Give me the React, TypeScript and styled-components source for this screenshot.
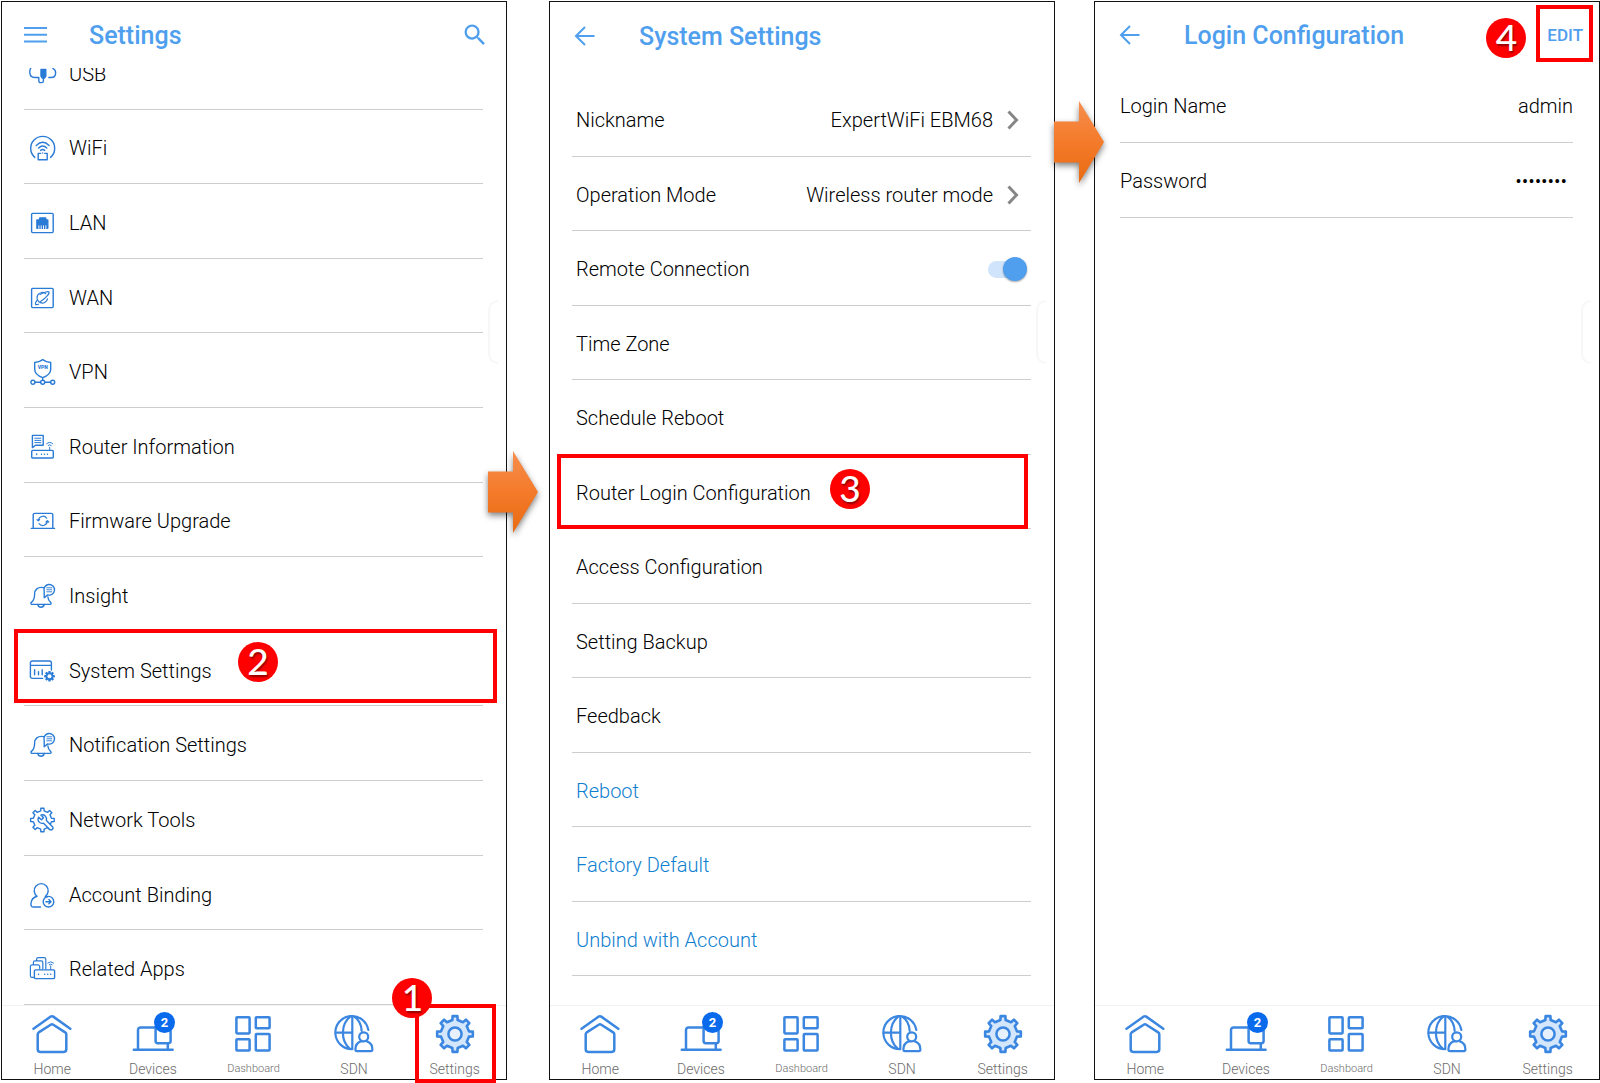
import React from "react";
import styled, { createGlobalStyle, css } from "styled-components";
import { MdSearch } from "react-icons/md";

const color = {
  accent: "#4f9fee",
  icon: "#2a7bd6",
  nav: "#3a86e0",
  link: "#0f80d0",
  line: "#cdcdcd",
  callout: "#ff0000",
};

const GlobalStyle = createGlobalStyle`
  *, *::before, *::after { box-sizing: border-box; }
  body { margin: 0; background: #fff; color: #000; font-family: Roboto, "Liberation Sans", sans-serif; }
  button { font: inherit; color: inherit; background: none; border: 0; padding: 0; text-align: left; cursor: pointer; }
  svg { display: block; flex: none; overflow: visible; }
`;

/* ---------- layout ---------- */

const Page = styled.main`
  display: grid;
  grid-template-columns: 1fr 42px 1fr 39px 1fr;
  min-height: 100vh;
  padding: 1px 0 3px 1px;
`;

const Gap = styled.div`
  position: relative;
  z-index: 3;
`;

const FlowArrow = styled.svg<{ $left: number; $top: number }>`
  position: absolute;
  left: ${(p) => p.$left}px;
  top: ${(p) => p.$top}px;
  filter: drop-shadow(0 3px 3px rgba(0, 0, 0, 0.5));
`;

const Panel = styled.section`
  position: relative;
  display: flex;
  flex-direction: column;
  min-width: 0;
  border: 1px solid #111;
`;

const Header = styled.header<{ $height?: number; $inset?: number }>`
  position: relative;
  z-index: 1;
  flex: none;
  display: flex;
  align-items: center;
  height: ${(p) => p.$height ?? 66}px;
  padding: 0 16px 0 ${(p) => p.$inset ?? 24}px;
`;

const HeaderButton = styled.button`
  width: 65px;
  color: ${color.accent};
`;

const Title = styled.h1`
  flex: 1;
  margin: 0;
  padding-top: 2px;
  color: ${color.accent};
  font-size: 25px;
  font-weight: 500;
  line-height: 32px;
`;

const SearchButton = styled.button`
  color: ${color.accent};
  margin-right: 1px;
`;

const EditButton = styled.button`
  position: relative;
  color: ${color.accent};
  font-size: 17px;
  font-weight: 500;
  line-height: 24px;
`;

const EdgeHandle = styled.div`
  position: absolute;
  right: 8px;
  top: 298px;
  width: 10px;
  height: 64px;
  border: 2px solid #f7f7f7;
  border-right: 0;
  border-radius: 10px 0 0 10px;
`;

const Viewport = styled.div`
  flex: 1;
  display: flex;
  flex-direction: column;
  overflow: hidden;
  padding: 0 23px 0 22px;
`;

const ScrolledList = styled.ul`
  flex: 1;
  display: flex;
  flex-direction: column;
  margin: -33px 0 0;
  padding: 0;
  list-style: none;
`;

const OptionList = styled.ul`
  flex: 1;
  display: flex;
  flex-direction: column;
  margin: 12px 23px 29px 22px;
  padding: 0;
  list-style: none;
`;

const Row = styled.li`
  position: relative;
  flex: 1;
  display: flex;
  min-height: 48px;
  border-bottom: 1px solid ${color.line};
`;

const rowText = css`
  font-size: 20px;
  font-weight: 350;
  line-height: 24px;
`;

const rowContent = css`
  ${rowText}
  flex: 1;
  display: flex;
  align-items: center;
`;

const MenuButton = styled.button`
  ${rowContent}
  gap: 13px;
  padding: 4px 6px 0;
`;

const OptionButton = styled.button<{ $link?: boolean }>`
  ${rowContent}
  padding: 3px 12px 0 4px;
  color: ${(p) => (p.$link ? color.link : "inherit")};
`;

const OptionLabel = styled.label`
  ${rowContent}
  justify-content: space-between;
  padding: 3px 4px 0;
`;

const Value = styled.span`
  margin-left: auto;
  margin-right: 14px;
`;

const Switch = styled.input`
  appearance: none;
  position: relative;
  width: 39px;
  height: 17px;
  margin: 0;
  border-radius: 9px;
  background: #d0e4fb;
  cursor: pointer;

  &::before {
    content: "";
    position: absolute;
    right: 0;
    top: -4px;
    width: 24px;
    height: 24px;
    border-radius: 50%;
    background: ${color.accent};
    box-shadow: 0 1px 2px rgba(0, 0, 0, 0.35);
  }
`;

const Details = styled.dl`
  flex: 1;
  margin: 0 26px 0 25px;
`;

const DetailRow = styled.div`
  ${rowText}
  display: flex;
  justify-content: space-between;
  align-items: center;
  height: 75px;
  padding-top: 2px;
  border-bottom: 1px solid ${color.line};

  dd {
    margin: 0;
  }
`;

const Secret = styled.dd`
  padding-right: 6px;
`;

/* ---------- bottom navigation ---------- */

const Nav = styled.nav`
  position: relative;
  z-index: 2;
  flex: none;
  display: flex;
  padding-right: 1px;
  border-top: 1px solid #f2f2f2;
`;

const NavItem = styled.button`
  position: relative;
  flex: 1 1 0;
  display: flex;
  flex-direction: column;
  align-items: center;
  gap: 7px;
  padding: 8px 0 2px;
`;

const NavLabel = styled.span<{ $small?: boolean }>`
  color: #6c6c6c;
  font-size: ${(p) => (p.$small ? 11 : 14)}px;
  font-weight: 350;
  line-height: 16px;
`;

const NavIcon = styled.span`
  position: relative;
  color: ${color.nav};
`;

const Count = styled.span`
  position: absolute;
  left: 21px;
  top: -2px;
  width: 21px;
  height: 21px;
  border-radius: 50%;
  background: #0a6aec;
  color: #fff;
  font-size: 13px;
  font-weight: 700;
  line-height: 22px;
  text-align: center;
`;

/* ---------- tutorial call-outs ---------- */

const Highlight = styled.span<{ $inset: string }>`
  position: absolute;
  inset: ${(p) => p.$inset};
  border: 4px solid ${color.callout};
  pointer-events: none;
`;

const Step = styled.span<{ $left: number; $top: number }>`
  position: absolute;
  left: ${(p) => p.$left}px;
  top: ${(p) => p.$top}px;
  width: 40px;
  height: 40px;
  border-radius: 50%;
  background: ${color.callout};
  color: #fff;
  font-family: Lato, "Open Sans", sans-serif;
  font-size: 37px;
  font-weight: 500;
  line-height: 38px;
  text-align: center;
  text-shadow: 1px 2px 2px rgba(70, 0, 0, 0.6);
  pointer-events: none;
`;

/* ---------- drawings ---------- */

function gear(cx: number, cy: number, outer: number, inner: number, teeth = 8) {
  const step = (Math.PI * 2) / teeth;
  const pts: string[] = [];
  const at = (r: number, a: number) =>
    `${(cx + r * Math.sin(a)).toFixed(2)} ${(cy - r * Math.cos(a)).toFixed(2)}`;
  for (let i = 0; i < teeth; i++) {
    const a = i * step;
    pts.push(at(inner, a - step * 0.24), at(outer, a - step * 0.17));
    pts.push(at(outer, a + step * 0.17), at(inner, a + step * 0.24));
  }
  return `M${pts.join("L")}Z`;
}

const Glyph = ({ children }: { children: React.ReactNode }) => (
  <svg width="26" height="26" viewBox="0 0 26 26" fill="none" stroke={color.icon} strokeWidth="1.4" strokeLinecap="round" strokeLinejoin="round" aria-hidden="true">
    {children}
  </svg>
);

const Frame = () => <rect x="1.6" y="3.4" width="21.6" height="19.2" rx="1" />;

const Bell = () => (
  <Glyph>
    <path d="M13.6 4.6C7.5 3.6 4.6 6.8 4.6 11.2c0 5-1.2 6.6-3.2 8.2-1.2 1 .0 2 .8 2H20c1 0 1.7-1 .6-2-1.900-1.600-2.500-3-2.700-5.400" />
    <path d="M7.800 21.500c.9 3.600 5.600 3.600 6.400 0M14.200 8.500v6.300l3.500-2.900a5.300 5.300 0 1 0-3.500-3.400Z" />
    <path d="M16.800 4.800h5M16.800 6.800h5M16.800 8.800h5" strokeWidth="0.9" />
  </Glyph>
);

const glyphs: Record<string, React.ReactNode> = {
  usb: (
    <Glyph>
      <path d="M2 5C-1.500 9.500-1 16.500 4.500 16.500H8.800V20a1.600 1.600 0 0 0 1.600 1.600h1.400a1.600 1.600 0 0 0 1.600-1.600v-3" />
      <path d="M18.800 16.500H21c6 0 5.500-7.500 2-8.800C22 3.500 18 2 14.500 4" />
      <path d="M11 8.500h4.800V15l-1.300 2h-2.200L11 15Z" fill={color.icon} />
    </Glyph>
  ),
  wifi: (
    <Glyph>
      <path d="M4.800 22.400a12 12 0 1 1 15.800 0" />
      <path d="M6.300 10.400q6.400-6.200 12.800 0M8.600 13q4.100-3.900 8.200 0M10.700 15.400q2-1.700 4 0" />
      <path d="M10.600 18.400H8.200v6.400h9v-6.400h-2.400M12.700 17.900v.1" />
    </Glyph>
  ),
  lan: (
    <Glyph>
      <Frame />
      <path d="M9.700 8h6v1.900h2.100V18.200H6.900V9.900h2.800Z" fill={color.icon} />
      <path d="M8.900 15.400v4M11.200 15.400v4M13.500 15.400v4M15.800 15.400v4" stroke="#fff" strokeWidth="0.900" strokeLinecap="butt" />
    </Glyph>
  ),
  wan: (
    <Glyph>
      <Frame />
      <path d="M15.800 8.700a5.300 5.300 0 1 0 1.700 5.200" strokeWidth="1.200" />
      <path d="M7.200 15.200c-3 4-1.900 5.200 1.400 4M10 9.400c4-2.300 8.600-3.300 9-2.300.6 1.600-3.200 6-8.400 9.400" strokeWidth="1.200" />
    </Glyph>
  ),
  vpn: (
    <Glyph>
      <path d="M12.700.6c2.600 2 5 2.700 8 2.900v6.700c0 4-3.200 6.600-8 8.400-4.800-1.800-8-4.400-8-8.400V3.500c3-.2 5.400-.9 8-2.900ZM12.700 18.600v2.600" />
      <circle cx="2.900" cy="23.300" r="2" />
      <circle cx="12.700" cy="23.300" r="2" />
      <circle cx="22.700" cy="23.300" r="2" />
      <path d="M4.900 23.300h5.800M14.700 23.300h6" />
      <text x="12.700" y="10.300" fontFamily="Roboto, sans-serif" fontSize="5" fontWeight="900" textAnchor="middle" fill={color.icon} stroke="none">VPN</text>
    </Glyph>
  ),
  router: (
    <Glyph>
      <path d="M2.400 1.400h10.800v9.800H5.600l-3.200 2.400Z" />
      <path d="M4.800 4.200h6M4.800 6.400h6M4.800 8.600h6" strokeWidth="1" />
      <rect x="1.700" y="16.400" width="21.600" height="7.600" rx="1" />
      <path d="M6.600 19.900v.6M11.400 20.200h.1M14.400 20.200h.1M17.400 20.200h.1" />
      <path d="M19.700 16.200v-3M16.600 9.800q3.100-2.900 6.200 0M18.200 11.400q1.500-1.300 3 0" strokeWidth="1" />
    </Glyph>
  ),
  firmware: (
    <Glyph>
      <path d="M3.200 20V7a1.600 1.600 0 0 1 1.600-1.600h16.400A1.600 1.600 0 0 1 22.800 7v13M1.300 20.400h23.200" />
      <path d="M8.300 12.600a4.700 4.700 0 0 1 8.400-2.500M17.400 13a4.700 4.700 0 0 1-8.400 2.700M7 11.600l1.300 1.300 1.300-1.300M16 14l1.400-1.300 1.300 1.300" strokeWidth="1.200" />
    </Glyph>
  ),
  bell: <Bell />,
  system: (
    <Glyph>
      <path d="M12.600 20.400H2.400a2 2 0 0 1-2-2V5a2 2 0 0 1 2-2h17a2 2 0 0 1 2 2v7M.4 7.400h21M4.600 11.600v5.200M8.500 13.600v3.200M12.200 11.600v5.200" />
      <path d={gear(19.500, 18.200, 4.800, 3.300)} strokeWidth="1.100" fill={color.icon} />
      <circle cx="19.500" cy="18.200" r="2" stroke="none" fill="#fff" />
    </Glyph>
  ),
  tools: (
    <Glyph>
      <path d={gear(12.400, 13, 11.900, 9.200)} />
      <path d="M8.600 10.200l2.900 2.600 2-2-2.600-2.700c3.300-1.100 6.400 1.500 5.500 5.300l6.300 6.500c1.300 1.800-1.300 4-2.900 2.600l-6.300-6.300c-3.800.9-6.600-2.400-4.900-6Z" fill="#fff" />
    </Glyph>
  ),
  account: (
    <Glyph>
      <path d="M10.500 25H3.400C.9 25 .8 22.800 1 21c.4-3 2.800-5.800 6.100-6.700a7 7 0 1 1 8.200 0l1.700.8" />
      <circle cx="18.500" cy="19.700" r="5.300" />
      <path d="M15.900 19.700h5M18.900 17.600l2.100 2.100-2.100 2.100" />
    </Glyph>
  ),
  apps: (
    <Glyph>
      <path d="M6.600 4.500V3.200A1.600 1.600 0 0 1 8.200 1.600h6a1.600 1.600 0 0 1 1.600 1.600v9.600M3.400 8.600V6.500A1.600 1.600 0 0 1 5 4.900h6.200a1.600 1.600 0 0 1 1.600 1.600v6.300M4 21.400H2A1.600 1.600 0 0 1 .4 19.800v-9.300a1.600 1.600 0 0 1 1.600-1.600h6.100a1.600 1.600 0 0 1 1.600 1.600v2.400" strokeWidth="1.200" />
      <rect x="4.400" y="13.900" width="20.200" height="8.700" rx="1" />
      <path d="M8.500 18.200v.3M14.700 18.300h.1M17.700 18.300h.1M20.700 18.300h.1" />
      <path d="M20.700 13.500V10M17.800 7q2.900-2.600 5.800 0M19.300 8.700q1.400-1.200 2.800 0" strokeWidth="1" />
    </Glyph>
  ),
};

const NavGlyph = ({ children }: { children: React.ReactNode }) => (
  <svg width="40" height="40" viewBox="0 0 40 40" fill="none" stroke="currentColor" strokeWidth="2.500" strokeLinecap="round" strokeLinejoin="round" aria-hidden="true">
    {children}
  </svg>
);

const navItems = [
  {
    label: "Home",
    glyph: <path d="M1.500 14.800 18.700 2.600q1.300-.9 2.600 0L38.300 14.800M5.700 20.300q0-1.200 1-1.900L18.700 10.700q1.300-.8 2.600 0L33.200 18.400q1.100.7 1.100 1.900V35.300a2.600 2.600 0 0 1-2.600 2.600H8.300a2.600 2.600 0 0 1-2.600-2.600Z" />,
  },
  {
    label: "Devices",
    count: 2,
    glyph: <path d="M5 35.500V16a2.600 2.600 0 0 1 2.600-2.600H23M.8 35.800H39.600M22.600 13v14a2.200 2.200 0 0 0 2.200 2.200h10.600a2.200 2.200 0 0 0 2.200-2.200V17M34.800 29.500v6" />,
  },
  {
    label: "Dashboard",
    small: true,
    glyph: (
      <>
        <rect x="3.400" y="3.200" width="13.200" height="16.200" rx="0.800" />
        <rect x="22.800" y="3.200" width="13.800" height="11" rx="0.800" />
        <rect x="3.400" y="25.300" width="13.200" height="11.300" rx="0.800" />
        <rect x="22.800" y="20" width="13.800" height="16.600" rx="0.800" />
      </>
    ),
  },
  {
    label: "SDN",
    glyph: (
      <path d="M18.300 35.200A16.600 16.600 0 1 1 34.300 15.800M18.300 2V35.200M1.800 18.600H18.300M16.500 2.400C6.500 10 6.500 27 15.800 34.500M20 2.400c4.600 3.200 7.400 8.600 7.600 14.200M29.700 18.300a4.500 4.500 0 1 1 0 9 4.500 4.500 0 1 1 0-9ZM26.600 27.400c-3.200 1.200-5.200 4-5.200 8.200q0 1.500 1.500 1.500h14q1.500 0 1.500-1.500c0-4.200-2-7-5.400-8.200" strokeWidth="2.200" />
    ),
  },
  {
    label: "Settings",
    glyph: (
      <>
        <path d={gear(20, 20, 18, 14.200)} fill="#d3e6fc" strokeWidth="2.600" />
        <circle cx="20" cy="20" r="6.600" fill="#e6f1fd" />
      </>
    ),
  },
];

const BottomNav = ({ step }: { step?: boolean }) => (
  <Nav>
    {navItems.map((item) => (
      <NavItem key={item.label} type="button">
        <NavIcon>
          <NavGlyph>{item.glyph}</NavGlyph>
          {item.count && <Count>{item.count}</Count>}
        </NavIcon>
        <NavLabel $small={item.small}>{item.label}</NavLabel>
        {step && item.label === "Settings" && (
          <>
            <Highlight $inset="-2px 9px -4px 11px" />
            <Step $left={-12} $top={-28}>1</Step>
          </>
        )}
      </NavItem>
    ))}
  </Nav>
);

const BackButton = () => (
  <HeaderButton type="button" aria-label="Back">
    <svg width="22" height="20" viewBox="0 0 22 20" fill="none" stroke="currentColor" strokeWidth="2">
      <path d="M20.500 10H2.500M11 1 2 10l9 9" />
    </svg>
  </HeaderButton>
);

const Chevron = () => (
  <svg width="12" height="20" viewBox="0 0 12 20" fill="none" stroke="#868686" strokeWidth="3" aria-hidden="true">
    <path d="M1.500 1.500 9.500 10l-8 8.500" />
  </svg>
);

const Arrow = ({ id, left, top }: { id: string; left: number; top: number }) => (
  <FlowArrow $left={left} $top={top} width="50" height="82" viewBox="0 0 50 82" aria-hidden="true">
    <defs>
      <linearGradient id={id} x1="0" y1="0" x2="0" y2="1">
        <stop offset="0" stopColor="#f68d4e" />
        <stop offset="0.500" stopColor="#f47b2a" />
        <stop offset="1" stopColor="#e96a12" />
      </linearGradient>
    </defs>
    <path d="M0 20.500H25V0L50 41 25 82V61.500H0Z" fill={`url(#${id})`} />
  </FlowArrow>
);

/* ---------- data ---------- */

const menu: [string, string][] = [
  ["USB", "usb"],
  ["WiFi", "wifi"],
  ["LAN", "lan"],
  ["WAN", "wan"],
  ["VPN", "vpn"],
  ["Router Information", "router"],
  ["Firmware Upgrade", "firmware"],
  ["Insight", "bell"],
  ["System Settings", "system"],
  ["Notification Settings", "bell"],
  ["Network Tools", "tools"],
  ["Account Binding", "account"],
  ["Related Apps", "apps"],
];

type Option = { label: string; value?: string; toggle?: boolean; link?: boolean };

const options: Option[] = [
  { label: "Nickname", value: "ExpertWiFi EBM68" },
  { label: "Operation Mode", value: "Wireless router mode" },
  { label: "Remote Connection", toggle: true },
  { label: "Time Zone" },
  { label: "Schedule Reboot" },
  { label: "Router Login Configuration" },
  { label: "Access Configuration" },
  { label: "Setting Backup" },
  { label: "Feedback" },
  { label: "Reboot", link: true },
  { label: "Factory Default", link: true },
  { label: "Unbind with Account", link: true },
];

/* ---------- screens ---------- */

const SettingsScreen = () => (
  <Panel>
    <Header $inset={22}>
      <HeaderButton type="button" aria-label="Menu">
        <svg width="23" height="18" viewBox="0 0 23 18" stroke="currentColor" strokeWidth="2">
          <path d="M0 2H23M0 8.700H23M0 15.400H23" />
        </svg>
      </HeaderButton>
      <Title>Settings</Title>
      <SearchButton type="button" aria-label="Search">
        <MdSearch size={28} />
      </SearchButton>
    </Header>
    <Viewport>
      <ScrolledList>
        {menu.map(([label, glyph]) => (
          <Row key={label}>
            <MenuButton type="button">
              {glyphs[glyph]}
              {label}
            </MenuButton>
            {label === "System Settings" && (
              <>
                <Highlight $inset="-3px -14px 2px -10px" />
                <Step $left={214} $top={10}>2</Step>
              </>
            )}
          </Row>
        ))}
      </ScrolledList>
    </Viewport>
    <EdgeHandle />
    <BottomNav step />
  </Panel>
);

const SystemScreen = () => (
  <Panel>
    <Header $height={68}>
      <BackButton />
      <Title>System Settings</Title>
    </Header>
    <OptionList>
      {options.map((o) => (
        <Row key={o.label}>
          {o.toggle ? (
            <OptionLabel>
              {o.label}
              <Switch type="checkbox" role="switch" defaultChecked />
            </OptionLabel>
          ) : (
            <OptionButton type="button" $link={o.link}>
              {o.label}
              {o.value && (
                <>
                  <Value>{o.value}</Value>
                  <Chevron />
                </>
              )}
            </OptionButton>
          )}
          {o.label === "Router Login Configuration" && (
            <>
              <Highlight $inset="-1px 3px -1px -15px" />
              <Step $left={258} $top={14}>3</Step>
            </>
          )}
        </Row>
      ))}
    </OptionList>
    <EdgeHandle />
    <BottomNav />
  </Panel>
);

const LoginScreen = () => (
  <Panel>
    <Header>
      <BackButton />
      <Title>Login Configuration</Title>
      <EditButton type="button">
        EDIT
        <Highlight $inset="-18px -10px -15px -11px" />
        <Step $left={-61} $top={-5}>4</Step>
      </EditButton>
    </Header>
    <Details>
      <DetailRow>
        <dt>Login Name</dt>
        <dd>admin</dd>
      </DetailRow>
      <DetailRow>
        <dt>Password</dt>
        <Secret>••••••••</Secret>
      </DetailRow>
    </Details>
    <EdgeHandle />
    <BottomNav />
  </Panel>
);

export default function App() {
  return (
    <>
      <GlobalStyle />
      <Page>
        <SettingsScreen />
        <Gap>
          <Arrow id="flow-1" left={-19} top={450} />
        </Gap>
        <SystemScreen />
        <Gap>
          <Arrow id="flow-2" left={-1} top={100} />
        </Gap>
        <LoginScreen />
      </Page>
    </>
  );
}
